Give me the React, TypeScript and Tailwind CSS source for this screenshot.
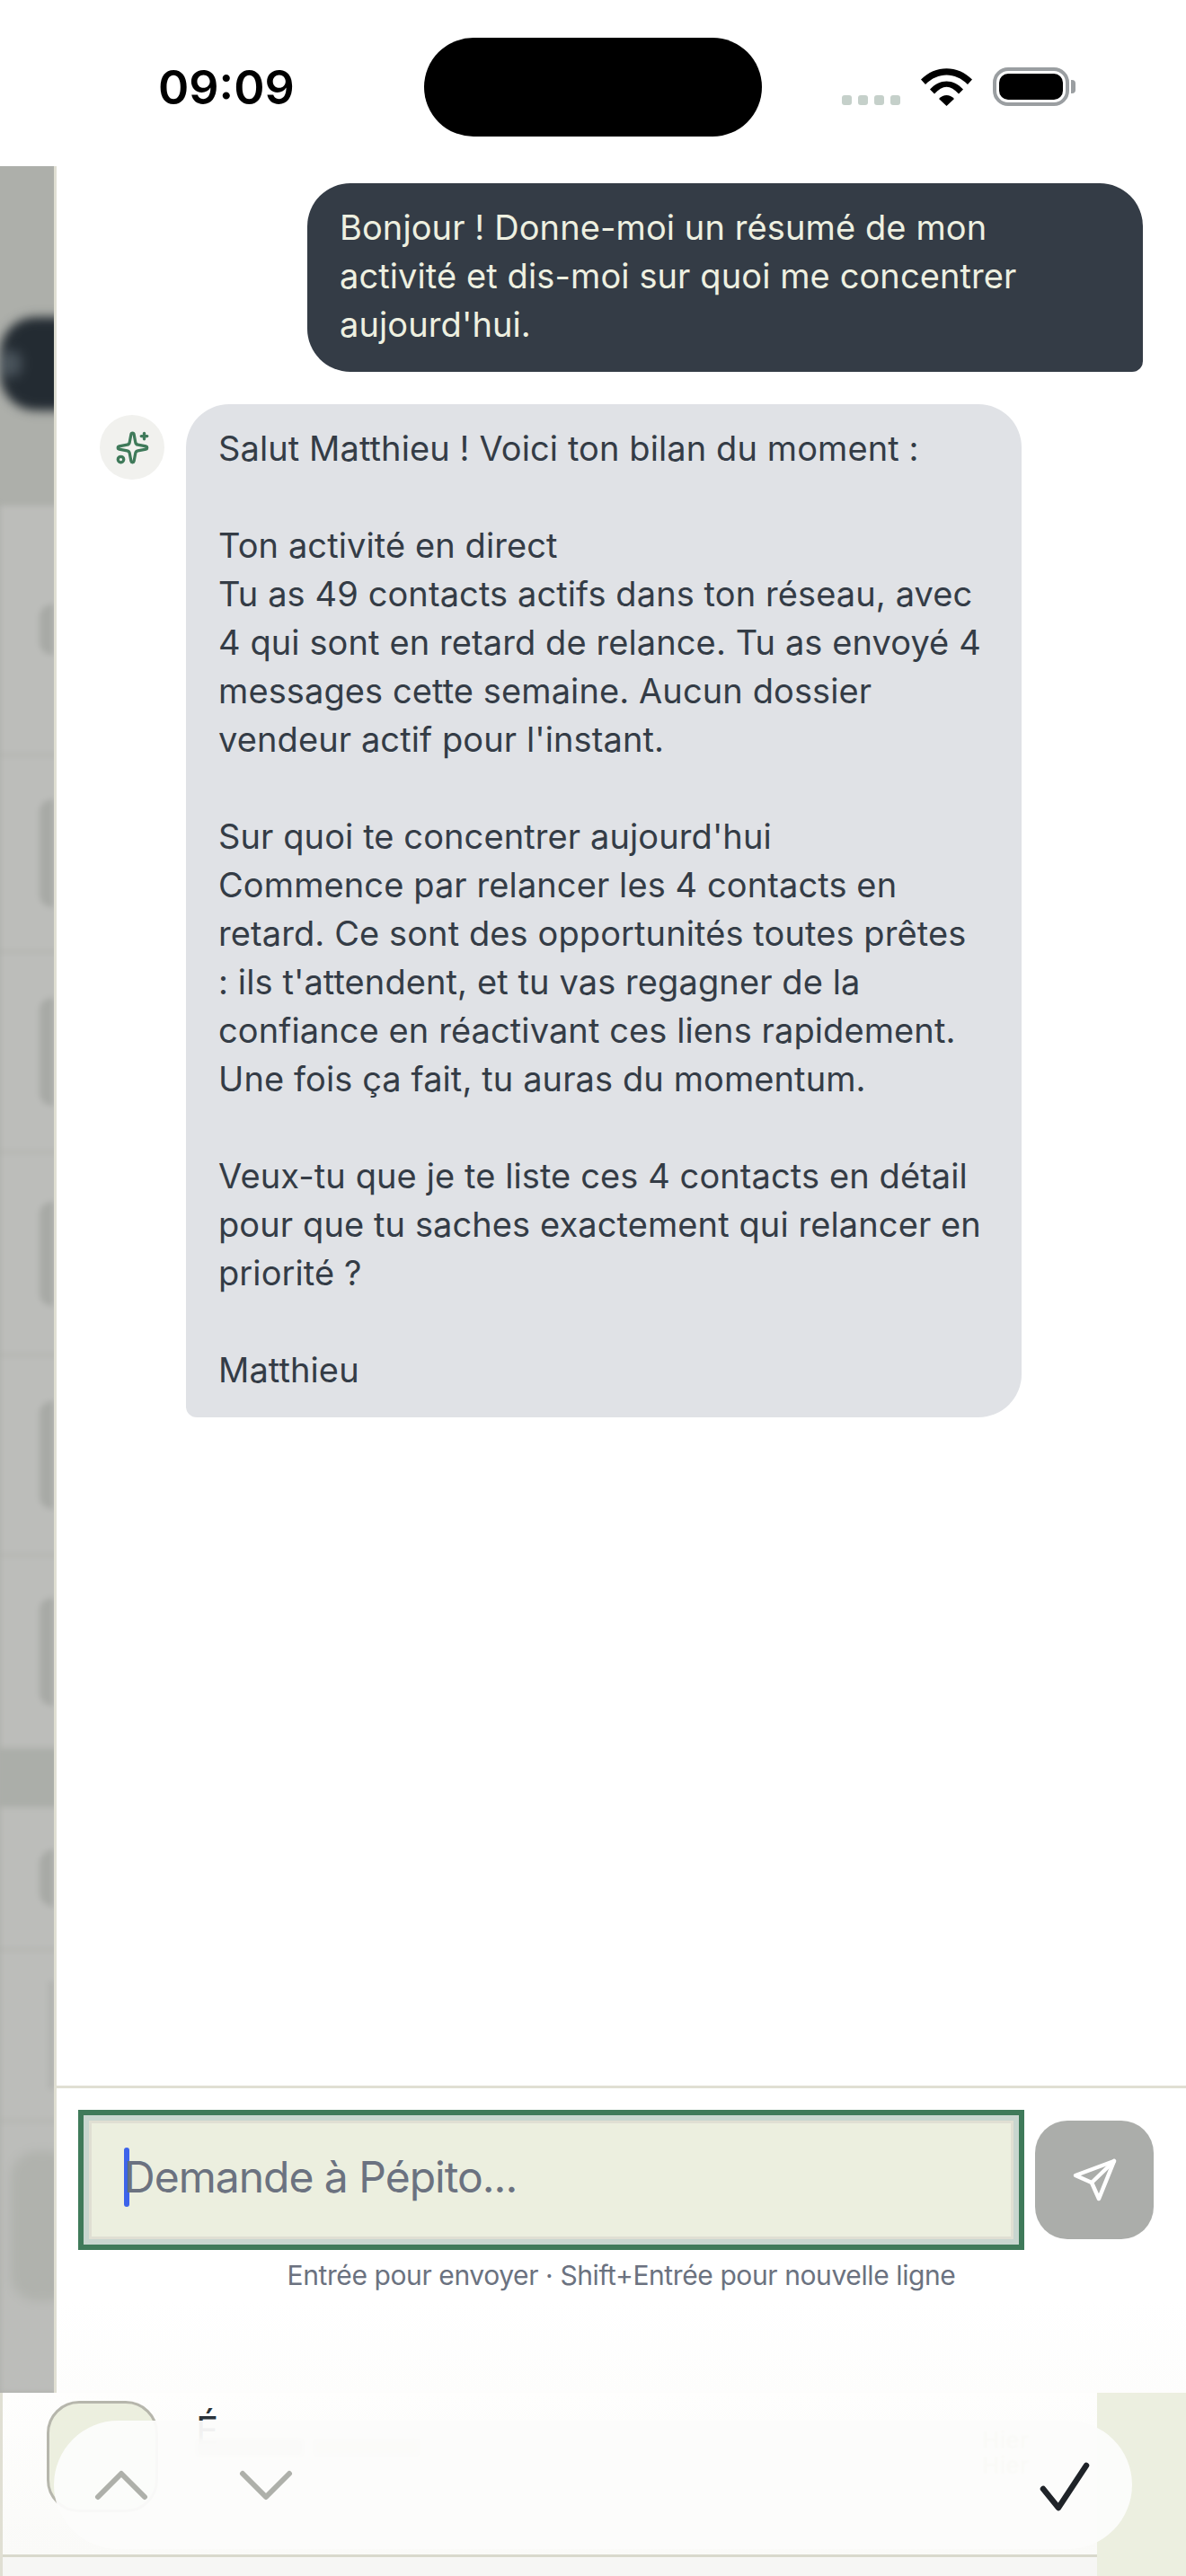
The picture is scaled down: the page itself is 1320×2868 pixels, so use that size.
import React from 'react';
import { Sparkles } from 'lucide-react';

const aiLines = [
    'Salut Matthieu ! Voici ton bilan du moment :',
    '',
    'Ton activité en direct',
    'Tu as 49 contacts actifs dans ton réseau, avec',
    '4 qui sont en retard de relance. Tu as envoyé 4',
    'messages cette semaine. Aucun dossier',
    "vendeur actif pour l'instant.",
    '',
    "Sur quoi te concentrer aujourd'hui",
    'Commence par relancer les 4 contacts en',
    'retard. Ce sont des opportunités toutes prêtes',
    ": ils t'attendent, et tu vas regagner de la",
    'confiance en réactivant ces liens rapidement.',
    'Une fois ça fait, tu auras du momentum.',
    '',
    'Veux-tu que je te liste ces 4 contacts en détail',
    'pour que tu saches exactement qui relancer en',
    'priorité ?',
    '',
    'Matthieu',
];

const userLines = [
    'Bonjour ! Donne-moi un résumé de mon',
    'activité et dis-moi sur quoi me concentrer',
    "aujourd'hui.",
];

// what shows of the page behind the panel: row height, avatar blob height
const behindRows = [
    { h: 279, blob: 56 },
    { h: 219, blob: 120 },
    { h: 223, blob: 120 },
    { h: 226, blob: 116 },
    { h: 223, blob: 120 },
    { h: 215, blob: 120 },
];

function StatusBar() {
    return (
        <div className="h-[185px] shrink-0 bg-white flex items-start">
            <div className="w-[176px] shrink-0" />
            <div className="w-[296px] shrink-0 pt-[70px] text-[52px] leading-[56px] font-semibold text-black">09:09</div>
            <div className="w-[376px] h-[110px] mt-[42px] shrink-0 rounded-[55px] bg-black" />
            <div className="ml-[89px] mt-[75px] flex items-end">
                <div className="flex gap-[7px] mb-[1px]">
                    <div className="w-[11px] h-[11px] rounded-[3px] bg-[#c5d0ca]" />
                    <div className="w-[11px] h-[11px] rounded-[3px] bg-[#c5d0ca]" />
                    <div className="w-[11px] h-[11px] rounded-[3px] bg-[#c5d0ca]" />
                    <div className="w-[11px] h-[11px] rounded-[3px] bg-[#c5d0ca]" />
                </div>
                <svg className="ml-[23px]" width="57" height="42" viewBox="0 0 57 42" fill="black">
                    <path d="M0 12.5C16 -4 41 -4 57 12.5L52 18C38 4 19 4 5 18Z" />
                    <path d="M10 23.5C21 11.5 36 11.5 47 23.5L42 28.5C33 18 24 18 15 28.5Z" />
                    <path d="M20 34C25 28.5 32 28.5 37 34L28.5 42Z" />
                </svg>
                <div className="ml-[23px] w-[85px] h-[43px] rounded-[17px] border-[4px] border-[#9a9ea1] p-[3px]">
                    <div className="w-full h-full rounded-[10px] bg-black" />
                </div>
                <div className="ml-[2px] mb-[14px] w-[5px] h-[15px] rounded-r-[4px] bg-[#9a9ea1]" />
            </div>
        </div>
    );
}

function BehindStrip() {
    return (
        <div className="w-[60px] shrink-0 overflow-hidden bg-[#adafaa]">
            <div className="w-[76px] flex flex-col blur-[3px]">
                <div className="h-[155px] shrink-0" />
                <div className="h-[130px] shrink-0 flex items-center">
                    <div className="w-[110px] h-[104px] rounded-l-[40px] bg-[#232b32] blur-[5px] flex items-center justify-end pr-[54px]">
                        <div className="w-[24px] h-[30px] rounded-full bg-[#4a545c] blur-[3px]" />
                    </div>
                </div>
                <div className="h-[93px] shrink-0" />
                {behindRows.map((row, i) => (
                    <div key={i} className="shrink-0 bg-[#bcbdba] border-b-[3px] border-[#b2b3af] flex items-center justify-end pr-[16px]" style={{ height: row.h }}>
                        <div className="w-[16px] rounded-l-[14px] bg-[#a8aaa6]" style={{ height: row.blob }} />
                    </div>
                ))}
                <div className="h-[64px] shrink-0 bg-[#abaea9]" />
                <div className="h-[160px] shrink-0 bg-[#bcbdba] border-b-[3px] border-[#b2b3af] flex items-center justify-end pr-[16px]">
                    <div className="w-[16px] h-[64px] rounded-l-[30px] bg-[#a8aaa6]" />
                </div>
                <div className="h-[191px] shrink-0 bg-[#bcbdba] border-b-[3px] border-[#b2b3af] flex items-center justify-end pr-[16px]">
                    <div className="w-[6px] h-[120px] bg-[#b0b2ae]" />
                </div>
                <div className="h-[301px] shrink-0 bg-[#bcbdba] pt-[32px] pl-[12px]">
                    <div className="w-[70px] h-[167px] rounded-[30px] bg-[#b0b2ad] blur-[4px]" />
                </div>
            </div>
        </div>
    );
}

function Messages() {
    return (
        <div className="flex-1 min-h-0 pt-[19px] flex flex-col gap-[36px] text-[38px] leading-[54px] tracking-[0.1px]">
            <div className="flex justify-end pr-[48px]">
                <div className="w-[930px] rounded-[48px] rounded-br-[12px] bg-[#343c46] px-[36px] pt-[22px] pb-[26px] text-[#eef0e0]">
                    {userLines.map((line) => (
                        <div key={line} className="whitespace-nowrap">{line}</div>
                    ))}
                </div>
            </div>
            <div className="flex pl-[48px] gap-[24px] items-start">
                <div className="w-[72px] h-[72px] mt-[12px] shrink-0 rounded-full bg-[#f1f1ee] flex items-center justify-center">
                    <Sparkles size={39} strokeWidth={2} color="#3f7a5a" />
                </div>
                <div className="w-[930px] rounded-[48px] rounded-bl-[12px] bg-[#e0e2e6] px-[36px] pt-[22px] pb-[26px] text-[#343c46]">
                    {aiLines.map((line, i) => (
                        <div key={i} className="h-[54px] whitespace-nowrap">{line}</div>
                    ))}
                </div>
            </div>
        </div>
    );
}

function Composer() {
    return (
        <div className="h-[342px] shrink-0 border-t-[3px] border-[#e0dfd3] bg-gradient-to-b from-white from-70% to-[#fdfdfc] pt-[24px] pl-[24px] pr-[36px]">
            <div className="flex items-center gap-[12px]">
                <div className="flex-1 h-[156px] border-[6px] border-[#3f7a5a]">
                    <div className="w-full h-full border-[6px] border-[#c8d6cf]">
                        <div className="w-full h-full border-[3px] border-[#e0dfd3] bg-[#ecefdf] pl-[36px] pb-[6px] flex items-center">
                            <div className="w-[6px] h-[66px] -mr-[6px] shrink-0 rounded-[3px] bg-[#3d63ea]" />
                            <div className="text-[48px] leading-[66px] text-[#6b7280] tracking-[-1px]">Demande à Pépito...</div>
                        </div>
                    </div>
                </div>
                <div className="w-[132px] h-[132px] shrink-0 rounded-[36px] bg-[#abadaa] flex items-center justify-center">
                    <svg width="60" height="60" viewBox="0 0 60 60" fill="none" stroke="white" strokeWidth="4.5" strokeLinejoin="round" strokeLinecap="round">
                        <path d="M52 9L9 25L27 33L35 51Z" />
                        <path d="M52 9L27 33" />
                    </svg>
                </div>
            </div>
            <div className="mt-[8px] -ml-[24px] -mr-[36px] text-center text-[30px] leading-[40px] text-[#6b7280] tracking-[-0.4px]">Entrée pour envoyer · Shift+Entrée pour nouvelle ligne</div>
        </div>
    );
}

function BottomList() {
    return (
        <div className="h-[204px] shrink-0 flex relative">
            <div className="w-[3px] bg-[#e0dfd3] shrink-0" />
            <div className="w-[1218px] shrink-0 flex flex-col">
                <div className="h-[183px] shrink-0 bg-gradient-to-b from-[#fefefd] to-[#fafaf8] border-b-[3px] border-[#d9d9cc] pl-[49px] pt-[9px] flex gap-[42px] overflow-hidden">
                    <div className="w-[124px] h-[124px] shrink-0 rounded-[36px] border-[3px] border-[#b6b6ac] bg-[#ecefdf]" />
                    <div className="flex-1 pt-[8px] text-[42px] leading-[50px] text-[#2a3239]">
                        <div>É</div>
                        <div className="mt-[-16px] flex gap-[10px] blur-[3px]">
                            <div className="w-[120px] h-[20px] bg-[#d0d0cc]" />
                            <div className="w-[120px] h-[20px] bg-[#dcdcd8]" />
                        </div>
                    </div>
                    <div className="mr-[76px] mt-[30px] text-[#c6cca8] text-[26px] leading-[28px] font-semibold blur-[1px]">
                        <div>Hier</div>
                        <div>Hier</div>
                    </div>
                </div>
                <div className="flex-1 bg-[#f6f6f4]" />
            </div>
            <div className="flex-1 bg-[#ecefe0]" />
            {/* floating toolbar */}
            <div className="absolute left-[60px] top-[31px] w-[1200px] h-[143px] rounded-[72px] bg-[#fcfcfb]/95 flex items-center pl-[45px] pr-[43px]">
                <svg width="60" height="36" viewBox="0 0 60 36" fill="none" stroke="#aeb0aa" strokeWidth="6" strokeLinecap="round" strokeLinejoin="round">
                    <path d="M4 31L30 5L56 31" />
                </svg>
                <svg className="ml-[101px]" width="60" height="36" viewBox="0 0 60 36" fill="none" stroke="#aeb0aa" strokeWidth="6" strokeLinecap="round" strokeLinejoin="round">
                    <path d="M4 5L30 31L56 5" />
                </svg>
                <svg className="ml-auto" width="60" height="60" viewBox="0 0 60 60" fill="none" stroke="#1f2328" strokeWidth="6.5" strokeLinecap="round" strokeLinejoin="round">
                    <path d="M4 34L21 55L52 8" />
                </svg>
            </div>
        </div>
    );
}

function App() {
    return (
        <div className="w-[1320px] h-[2868px] overflow-hidden bg-white flex flex-col font-['Inter',sans-serif]">
            <StatusBar />
            <div className="h-[2479px] shrink-0 flex">
                <BehindStrip />
                <div className="flex-1 min-w-0 border-l-[3px] border-[#e0dfd3] bg-white flex flex-col">
                    <Messages />
                    <Composer />
                </div>
            </div>
            <BottomList />
        </div>
    );
}

export default App;
